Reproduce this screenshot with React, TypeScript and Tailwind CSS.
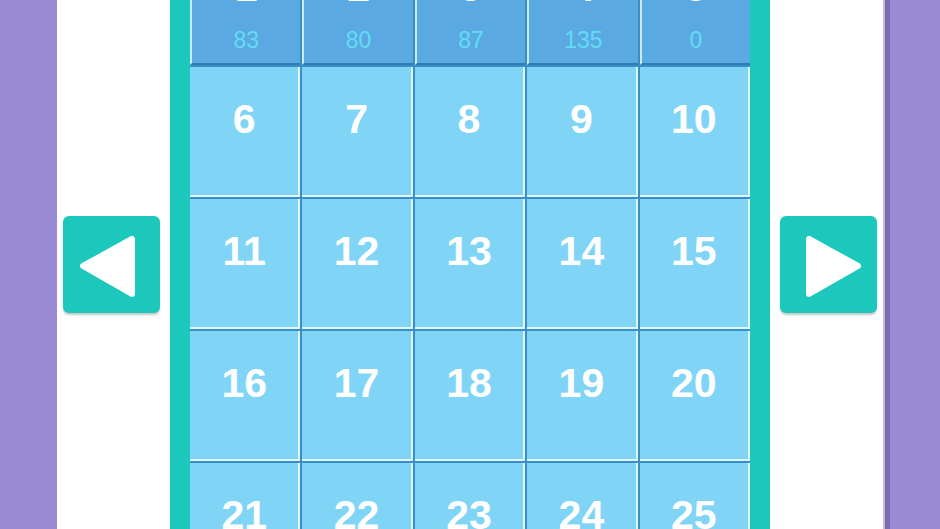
import React from 'react';

type Level = {
  id: number;
  score?: number;
};

// first row has been played, the rest are still open
const levels: Level[] = [
  { id: 1, score: 83 },
  { id: 2, score: 80 },
  { id: 3, score: 87 },
  { id: 4, score: 135 },
  { id: 5, score: 0 },
  ...Array.from({ length: 20 }, (_, i) => ({ id: i + 6 })),
];

function ArrowButton({ dir }: { dir: 'left' | 'right' }) {
  const points = dir === 'left' ? '20,50 69,23 69,78' : '78,50 29,23 29,78';
  return (
    <button
      className="w-[97px] h-[97px] shrink-0 rounded-[6px] bg-[#1cc8bc] shadow-[0_2px_2px_rgba(0,0,0,0.22)] flex items-center justify-center"
      aria-label={dir === 'left' ? 'Previous page' : 'Next page'}
    >
      <svg width="97" height="97" viewBox="0 0 97 97">
        <polygon points={points} fill="#ffffff" stroke="#ffffff" strokeWidth="6" strokeLinejoin="round" />
      </svg>
    </button>
  );
}

function LevelCell({ level }: { level: Level }) {
  const played = level.score !== undefined;
  return (
    <div
      className={
        played
          ? 'h-[130px] flex flex-col items-center pt-[32px] bg-[#5aa9e2] border-l-2 border-[#cdeafa] border-b-2 border-b-[#2f7db3]'
          : 'h-[130px] flex flex-col items-center pt-[32px] bg-[#80d4f6] border-r-2 border-b-2 border-[#e4f6fd]'
      }
    >
      <span className="text-[41px] leading-none font-bold text-white">{level.id}</span>
      {played && (
        <span className="mt-[21px] text-[23px] leading-none text-[#62dcf3]">{level.score}</span>
      )}
    </div>
  );
}

export default function App() {
  return (
    <div
      className="w-[940px] h-[529px] overflow-hidden bg-[#9a89d3] flex justify-center"
      style={{ fontFamily: '"Liberation Sans", Arial, sans-serif' }}
    >
      <div className="w-[826px] h-full bg-white flex items-center justify-center gap-[10px] shadow-[2px_0_0_#c4bce0,7px_0_0_#7b6caa]">
        <ArrowButton dir="left" />

        {/* level board, scrolled so the first row sits partly above the view */}
        <div className="self-start -mt-[65px] w-[600px] shrink-0 bg-[#1cc8bc] px-[20px]">
          <div className="grid grid-cols-5 gap-[2px] bg-[#3690c6]">
            {levels.map((level) => (
              <LevelCell key={level.id} level={level} />
            ))}
          </div>
        </div>

        <ArrowButton dir="right" />
      </div>
    </div>
  );
}
